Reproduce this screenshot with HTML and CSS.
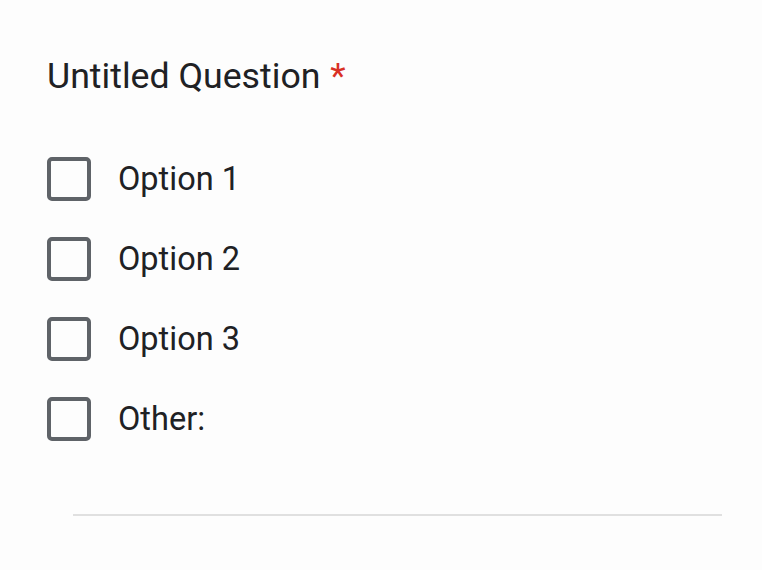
FILE: index.html
```html
<!DOCTYPE html>
<html>
<head>
<meta charset="utf-8">
<link rel="stylesheet" href="styles.css">
</head>
<body>
<div class="card">
  <div class="title">Untitled Question <span class="req">*</span></div>
  <div class="options">
    <div class="opt"><span class="box"></span><span class="label">Option 1</span></div>
    <div class="opt"><span class="box"></span><span class="label">Option 2</span></div>
    <div class="opt"><span class="box"></span><span class="label">Option 3</span></div>
    <div class="opt"><span class="box"></span><span class="label">Other:</span></div>
  </div>
  <div class="rule"></div>
</div>
</body>
</html>
```
FILE: styles.css
```css
html, body {
  margin: 0;
  background: #fdfdfd;
}
body {
  font-family: Roboto, "Noto Sans", sans-serif;
  color: #202124;
  width: 762px;
  height: 570px;
  overflow: hidden;
}
.card {
  padding: 54px 0 0 47px;
}
.title {
  font-size: 35.7px;
  line-height: 44px;
}
.req {
  color: #d93025;
  margin-left: 1px;
}
.options {
  margin-top: 59px;
  display: flex;
  flex-direction: column;
  gap: 36px;
}
.opt {
  display: flex;
  align-items: center;
  height: 44px;
}
.box {
  box-sizing: border-box;
  width: 44px;
  height: 44px;
  border: 4px solid #5f6368;
  border-radius: 5px;
  margin-right: 27px;
}
.label {
  font-size: 32.5px;
}
.rule {
  margin: 73px 40px 0 26px;
  height: 2px;
  background: #e0e0e0;
}
```
